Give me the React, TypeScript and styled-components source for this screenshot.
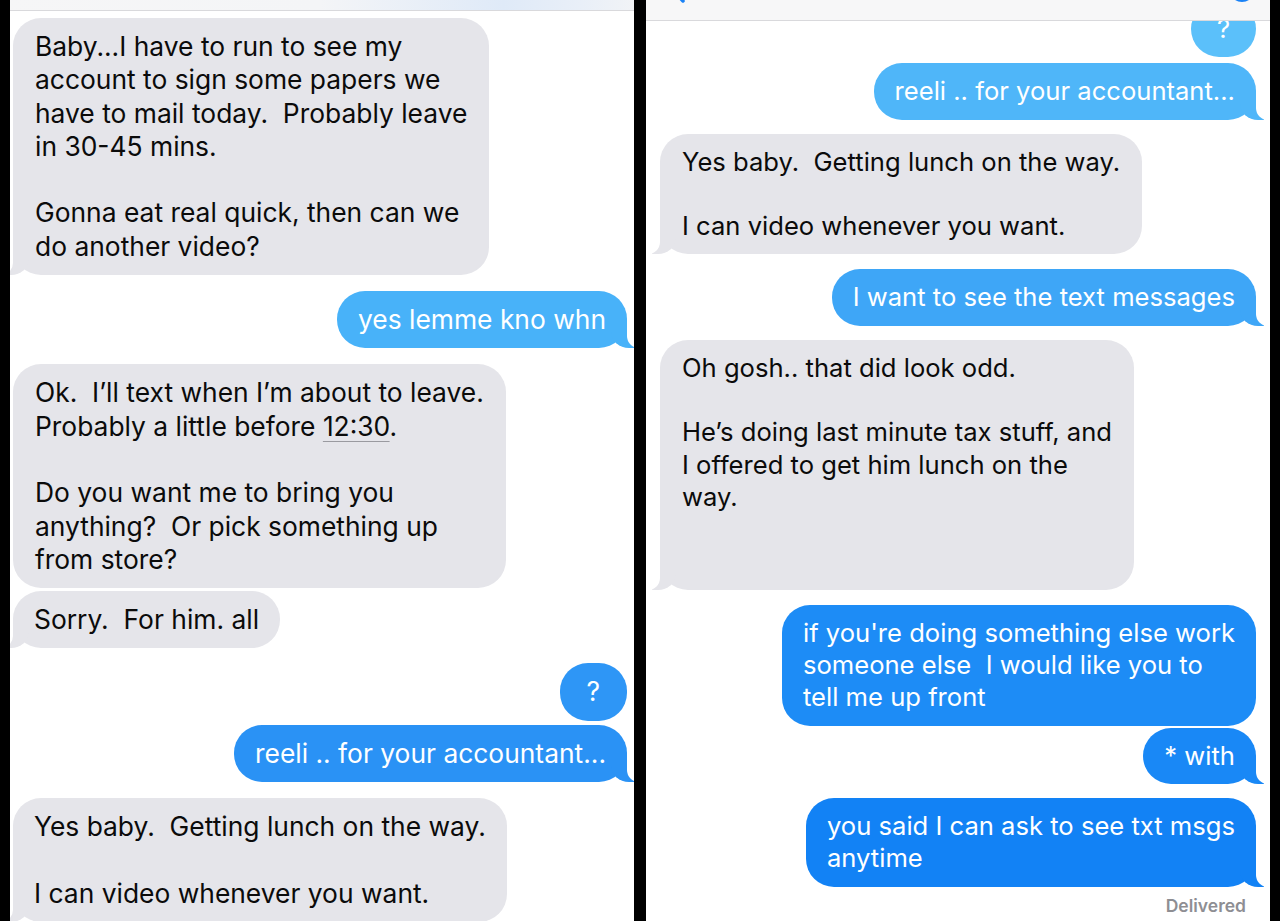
import React from 'react';
import styled, { createGlobalStyle, css } from 'styled-components';

const GlobalStyle = createGlobalStyle`
  html, body {
    margin: 0;
    padding: 0;
    background: #000;
  }
  body {
    font-family: Inter, "Noto Sans", "Liberation Sans", sans-serif;
    -webkit-font-smoothing: antialiased;
  }
`;

const Screen = styled.div`
  display: flex;
  gap: 12px;
  width: 1280px;
  height: 921px;
  padding-left: 10px;
  box-sizing: border-box;
  overflow: hidden;
  background: #000;
`;

const Panel = styled.div<{ $padL: number; $padR: number; $size: number; $line: number }>`
  width: 624px;
  flex-shrink: 0;
  display: flex;
  flex-direction: column;
  background: #fff;
  overflow: hidden;
  font-size: ${(p) => p.$size}px;
  line-height: ${(p) => p.$line}px;
  padding: 0 ${(p) => p.$padR}px 0 ${(p) => p.$padL}px;
  box-sizing: border-box;
`;

const TopBar = styled.div<{ $h: number; $shade: string }>`
  position: relative;
  z-index: 2;
  flex-shrink: 0;
  height: ${(p) => p.$h}px;
  margin: 0 -20px;
  padding: 0 20px;
  background: ${(p) => p.$shade};
  border-bottom: 1px solid #d9d9dc;
  display: flex;
  align-items: flex-end;
  overflow: hidden;
`;

const BarRow = styled.div`
  flex: 1;
  display: flex;
  align-items: center;
  justify-content: space-between;
  height: 40px;
  margin-bottom: 11px;
  padding: 0 0 0 8px;
`;

const meTail = css`
  &::before {
    content: '';
    position: absolute;
    bottom: 0;
    right: -8px;
    width: 24px;
    height: 28px;
    background: inherit;
    border-bottom-left-radius: 18px 16px;
  }
  &::after {
    content: '';
    position: absolute;
    bottom: 0;
    right: -30px;
    width: 30px;
    height: 28px;
    background: #fff;
    border-bottom-left-radius: 12px;
  }
`;

const themTail = css`
  &::before {
    content: '';
    position: absolute;
    bottom: 0;
    left: -8px;
    width: 24px;
    height: 28px;
    background: inherit;
    border-bottom-right-radius: 18px 16px;
  }
  &::after {
    content: '';
    position: absolute;
    bottom: 0;
    left: -30px;
    width: 30px;
    height: 28px;
    background: #fff;
    border-bottom-right-radius: 12px;
  }
`;

const Bubble = styled.div<{ $me?: boolean; $tint?: string; $tail?: boolean; $gap: number; $padX?: number }>`
  position: relative;
  flex-shrink: 0;
  align-self: ${(p) => (p.$me ? 'flex-end' : 'flex-start')};
  margin-top: ${(p) => p.$gap}px;
  padding: 12px ${(p) => p.$padX ?? 21}px;
  border-radius: 28px;
  background: ${(p) => (p.$me ? p.$tint : '#e5e5ea')};
  color: ${(p) => (p.$me ? '#fff' : '#0b0b0b')};
  white-space: pre;
  ${(p) => p.$tail && (p.$me ? meTail : themTail)}
`;

const Linked = styled.span`
  text-decoration: underline;
  text-decoration-color: #9a9aa0;
  text-decoration-thickness: 1px;
  text-underline-offset: 5px;
`;

const Status = styled.div`
  align-self: flex-end;
  margin-top: 8px;
  margin-right: 10px;
  font-size: 17.5px;
  line-height: 22px;
  font-weight: 600;
  color: #8e8e93;
`;

const Chevron = () => (
  <svg width="18" height="30" viewBox="0 0 18 30">
    <path d="M15 3 L4 15 L15 27" fill="none" stroke="#1a82f6" strokeWidth="3.5" strokeLinecap="round" strokeLinejoin="round" />
  </svg>
);

const InfoIcon = () => (
  <svg width="28" height="28" viewBox="0 0 28 28">
    <circle cx="14" cy="14" r="12" fill="none" stroke="#1a82f6" strokeWidth="2" />
    <circle cx="14" cy="8" r="1.6" fill="#1a82f6" />
    <path d="M14 12 V20" stroke="#1a82f6" strokeWidth="2.4" strokeLinecap="round" />
  </svg>
);

export default function App() {
  return (
    <>
      <GlobalStyle />
      <Screen>
        <Panel $padL={3} $padR={7} $size={26.4} $line={33.3}>
          <TopBar $h={10} $shade="linear-gradient(90deg, #f6f6f7 0%, #f4f5f7 50%, #dfeaf8 78%, #e9eff8 90%, #f3f4f6 100%)" />
          <Bubble $gap={7} $tail $padX={22}>
            {'Baby...I have to run to see my\naccount to sign some papers we\nhave to mail today.  Probably leave\nin 30-45 mins.\n\nGonna eat real quick, then can we\ndo another video?'}
          </Bubble>
          <Bubble $me $tail $tint="#48b2f9" $gap={16}>
            yes lemme kno whn
          </Bubble>
          <Bubble $gap={16} $padX={22}>
            {'Ok.  I\u2019ll text when I\u2019m about to leave.\nProbably a little before '}
            <Linked>12:30</Linked>
            {'.\n\nDo you want me to bring you\nanything?  Or pick something up\nfrom store?'}
          </Bubble>
          <Bubble $gap={3} $tail>
            Sorry.  For him. all
          </Bubble>
          <Bubble $me $tint="#2e96f6" $gap={15} $padX={27}>
            ?
          </Bubble>
          <Bubble $me $tail $tint="#2a92f5" $gap={4}>
            reeli .. for your accountant...
          </Bubble>
          <Bubble $gap={16} $tail>
            {'Yes baby.  Getting lunch on the way.\n\nI can video whenever you want.'}
          </Bubble>
        </Panel>

        <Panel $padL={14} $padR={14} $size={25.6} $line={32.3}>
          <TopBar $h={20} $shade="#f7f7f8">
            <BarRow>
              <Chevron />
              <InfoIcon />
            </BarRow>
          </TopBar>
          <Bubble $me $tint="#5bc0fa" $gap={-20} $padX={26}>
            ?
          </Bubble>
          <Bubble $me $tail $tint="#4fb6f9" $gap={6}>
            reeli .. for your accountant...
          </Bubble>
          <Bubble $gap={14} $tail $padX={22}>
            {'Yes baby.  Getting lunch on the way.\n\nI can video whenever you want.'}
          </Bubble>
          <Bubble $me $tail $tint="#3ea6f7" $gap={15}>
            I want to see the text messages
          </Bubble>
          <Bubble $gap={14} $tail $padX={22}>
            {'Oh gosh.. that did look odd.\n\nHe\u2019s doing last minute tax stuff, and\nI offered to get him lunch on the\nway.\n\n\u00a0'}
          </Bubble>
          <Bubble $me $tint="#1d8cf6" $gap={15}>
            {'if you\'re doing something else work\nsomeone else  I would like you to\ntell me up front'}
          </Bubble>
          <Bubble $me $tail $tint="#1988f6" $gap={2}>
            * with
          </Bubble>
          <Bubble $me $tail $tint="#1282f5" $gap={14}>
            {'you said I can ask to see txt msgs\nanytime'}
          </Bubble>
          <Status>Delivered</Status>
        </Panel>
      </Screen>
    </>
  );
}
